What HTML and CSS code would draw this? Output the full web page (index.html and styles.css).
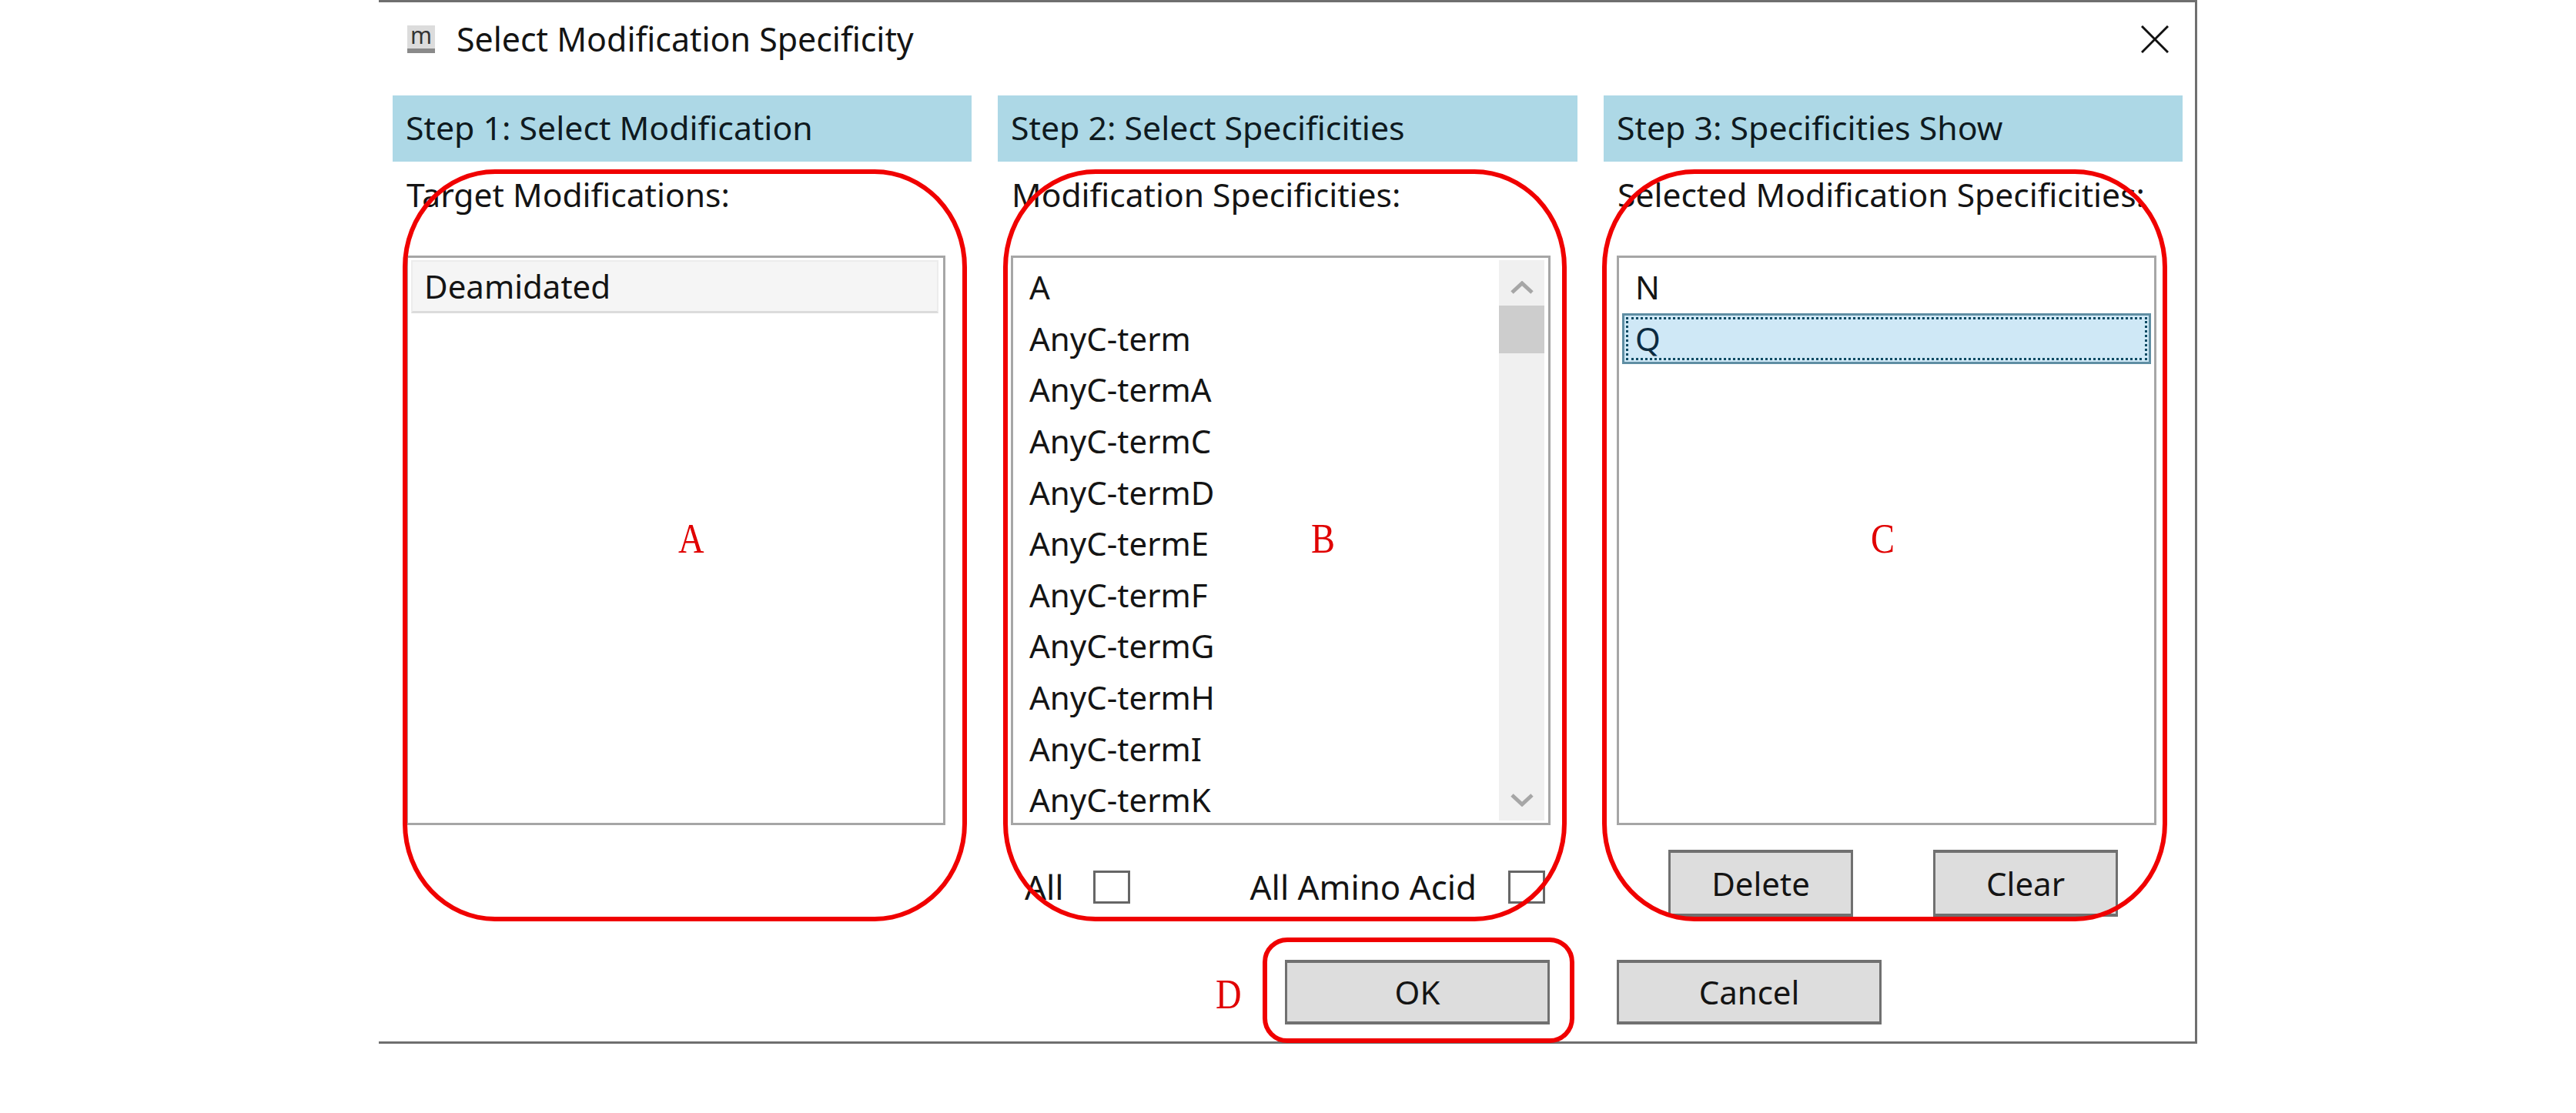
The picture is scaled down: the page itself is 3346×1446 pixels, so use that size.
FILE: index.html
```html
<!DOCTYPE html>
<html lang="en">
<head>
<meta charset="utf-8">
<title>Select Modification Specificity</title>
<link rel="stylesheet" href="styles.css">
</head>
<body>
<div class="page">
  <div class="dialog">
    <header class="titlebar">
      <span class="app-icon">m</span>
      <span class="title">Select Modification Specificity</span>
      <svg class="close" viewBox="0 0 36 36" aria-hidden="true"><path d="M1 1 L35 35 M35 1 L1 35"/></svg>
    </header>
    <div class="steps">
      <section class="step">
        <h2 class="step-head">Step 1: Select Modification</h2>
        <div class="step-label">Target Modifications:</div>
        <div class="list">
          <div class="rows">
            <div class="row row-current">Deamidated</div>
          </div>
        </div>
      </section>
      <section class="step">
        <h2 class="step-head">Step 2: Select Specificities</h2>
        <div class="step-label">Modification Specificities:</div>
        <div class="list">
          <div class="rows">
            <div class="row">A</div>
            <div class="row">AnyC-term</div>
            <div class="row">AnyC-termA</div>
            <div class="row">AnyC-termC</div>
            <div class="row">AnyC-termD</div>
            <div class="row">AnyC-termE</div>
            <div class="row">AnyC-termF</div>
            <div class="row">AnyC-termG</div>
            <div class="row">AnyC-termH</div>
            <div class="row">AnyC-termI</div>
            <div class="row">AnyC-termK</div>
          </div>
          <div class="scrollbar">
            <div class="scroll-btn scroll-up"><svg viewBox="0 0 30 17" aria-hidden="true"><path d="M2 15 L15 3 L28 15"/></svg></div>
            <div class="scroll-thumb"></div>
            <div class="scroll-track"></div>
            <div class="scroll-btn scroll-down"><svg viewBox="0 0 30 17" aria-hidden="true"><path d="M2 2 L15 14 L28 2"/></svg></div>
          </div>
        </div>
        <div class="checks">
          <span>All</span><span class="checkbox check-all"></span>
          <span class="check-amino">All Amino Acid</span><span class="checkbox check-last"></span>
        </div>
      </section>
      <section class="step">
        <h2 class="step-head">Step 3: Specificities Show</h2>
        <div class="step-label">Selected Modification Specificities:</div>
        <div class="list">
          <div class="rows">
            <div class="row">N</div>
            <div class="row row-selected">Q</div>
          </div>
        </div>
        <div class="list-actions">
          <button class="btn btn-small" type="button">Delete</button>
          <button class="btn btn-small" type="button">Clear</button>
        </div>
      </section>
    </div>
    <div class="dialog-actions">
      <button class="btn btn-wide" type="button">OK</button>
      <button class="btn btn-wide" type="button">Cancel</button>
    </div>
  </div>

  <div class="mark mark-a"></div>
  <div class="mark mark-b"></div>
  <div class="mark mark-c"></div>
  <div class="mark mark-d"></div>
  <span class="letter letter-a">A</span>
  <span class="letter letter-b">B</span>
  <span class="letter letter-c">C</span>
  <span class="letter letter-d">D</span>
</div>
</body>
</html>
```
FILE: styles.css
```css
* { box-sizing: border-box; }
html, body { margin: 0; padding: 0; background: #fff; }
.page {
  position: relative;
  width: 3346px;
  height: 1446px;
  overflow: hidden;
  font-family: "Noto Sans", sans-serif;
  font-size: 42px;
  line-height: 60px;
  color: #141414;
}
.dialog {
  width: 2362px;
  height: 1356px;
  margin-left: 492px;
  border-top: 3px solid #6f6f6f;
  border-right: 3px solid #6f6f6f;
  border-bottom: 3px solid #6f6f6f;
  background: #fff;
}
.titlebar {
  display: flex;
  align-items: center;
  height: 96px;
  margin-bottom: 25px;
  padding: 0 34px 0 37px;
}
.app-icon {
  display: block;
  width: 36px;
  height: 36px;
  background: #dcdcdc;
  border-bottom: 6px solid #8a8a8a;
  font-size: 30px;
  line-height: 26px;
  text-align: center;
  color: #333;
}
.title {
  margin-left: 28px;
  font-size: 42.9px;
  flex: 1;
}
.close { width: 36px; height: 36px; }
.close path { fill: none; stroke: #111; stroke-width: 3; }
.steps {
  display: grid;
  grid-template-columns: 752px 753px 752px;
  column-gap: 34px;
  padding-left: 18px;
}
.step-head {
  display: flex;
  align-items: center;
  height: 86px;
  margin: 0;
  padding: 0 0 3px 17px;
  background: #add8e6;
  font-size: 42.8px;
  font-weight: 400;
  color: #0f1a20;
}
.step-label {
  height: 122px;
  padding: 12px 0 0 18px;
  font-size: 42.6px;
}
.list {
  display: flex;
  width: 701px;
  height: 740px;
  margin-left: 17px;
  border: 3px solid #a6a6a6;
  background: #fff;
  overflow: hidden;
}
.rows {
  flex: 1;
  min-width: 0;
  padding: 5px 4px 0;
  overflow: hidden;
}
.row {
  display: flex;
  align-items: center;
  height: 66.6px;
  padding-left: 17px;
}
.row-current {
  height: 68.6px;
  margin-top: -2px;
  margin-right: 2px;
  background: #f5f5f5;
  border-top: 2px solid #ececec;
  border-bottom: 3px solid #dcdcdc;
  border-left: 2px solid #ececec;
  border-right: 2px solid #ececec;
  padding-left: 15px;
}
.row-selected {
  border: 3px solid #5f8ea3;
  padding-left: 14px;
  background: #cfe8f6;
  color: #0b2a3f;
  outline: 3px dotted #0d4a63;
  outline-offset: -8px;
}
.scrollbar {
  display: flex;
  flex-direction: column;
  flex: none;
  width: 59px;
  margin: 3px 5px 3px 0;
  background: #f0f0f0;
}
.scroll-btn {
  display: flex;
  justify-content: center;
  flex: none;
  height: 59px;
}
.scroll-up { padding-top: 27px; }
.scroll-down { padding-top: 24px; }
.scroll-btn svg { width: 30px; height: 17px; }
.scroll-btn path { fill: none; stroke: #a6a6a6; stroke-width: 5; }
.scroll-thumb { flex: none; height: 62px; background: #cdcdcd; }
.scroll-track { flex: 1; }
.checks {
  display: flex;
  align-items: center;
  margin-top: 50px;
  padding: 0 42px 0 35px;
  font-size: 43.8px;
}
.checkbox {
  display: block;
  flex: none;
  width: 48px;
  height: 43px;
  border: 3px solid #666;
  background: #fff;
}
.check-all { margin-left: 38px; }
.check-amino { margin-left: auto; }
.check-last { margin-left: 41px; }
.list-actions {
  display: flex;
  gap: 104px;
  margin-top: 32px;
  padding-left: 84px;
}
.btn {
  display: block;
  margin: 0;
  padding: 0;
  border-style: solid;
  border-color: #707070;
  border-width: 4px 3px;
  border-radius: 0;
  background: #dddddd;
  font: inherit;
  color: #141414;
}
.btn-small { width: 240px; height: 87px; }
.btn-wide { width: 344px; height: 84px; }
.dialog-actions {
  display: flex;
  justify-content: flex-end;
  gap: 87px;
  margin-top: 56px;
  padding-right: 407px;
}
.mark {
  position: absolute;
  border: 6px solid #f00000;
  pointer-events: none;
}
.mark-a { left: 523px; top: 220px; width: 733px; height: 977px; border-radius: 120px / 127px; }
.mark-b { left: 1303px; top: 220px; width: 732px; height: 977px; border-radius: 120px / 127px; }
.mark-c { left: 2081px; top: 220px; width: 734px; height: 977px; border-radius: 120px / 127px; }
.mark-d { left: 1640px; top: 1218px; width: 405px; height: 137px; border-radius: 32px; }
.letter {
  position: absolute;
  font-family: "Liberation Serif", serif;
  font-size: 54px;
  line-height: 54px;
  color: #e00000;
  transform: scaleX(0.86);
  transform-origin: left top;
}
.letter-a { left: 881px; top: 673px; }
.letter-b { left: 1703px; top: 673px; }
.letter-c { left: 2430px; top: 673px; }
.letter-d { left: 1579px; top: 1265px; }
```
